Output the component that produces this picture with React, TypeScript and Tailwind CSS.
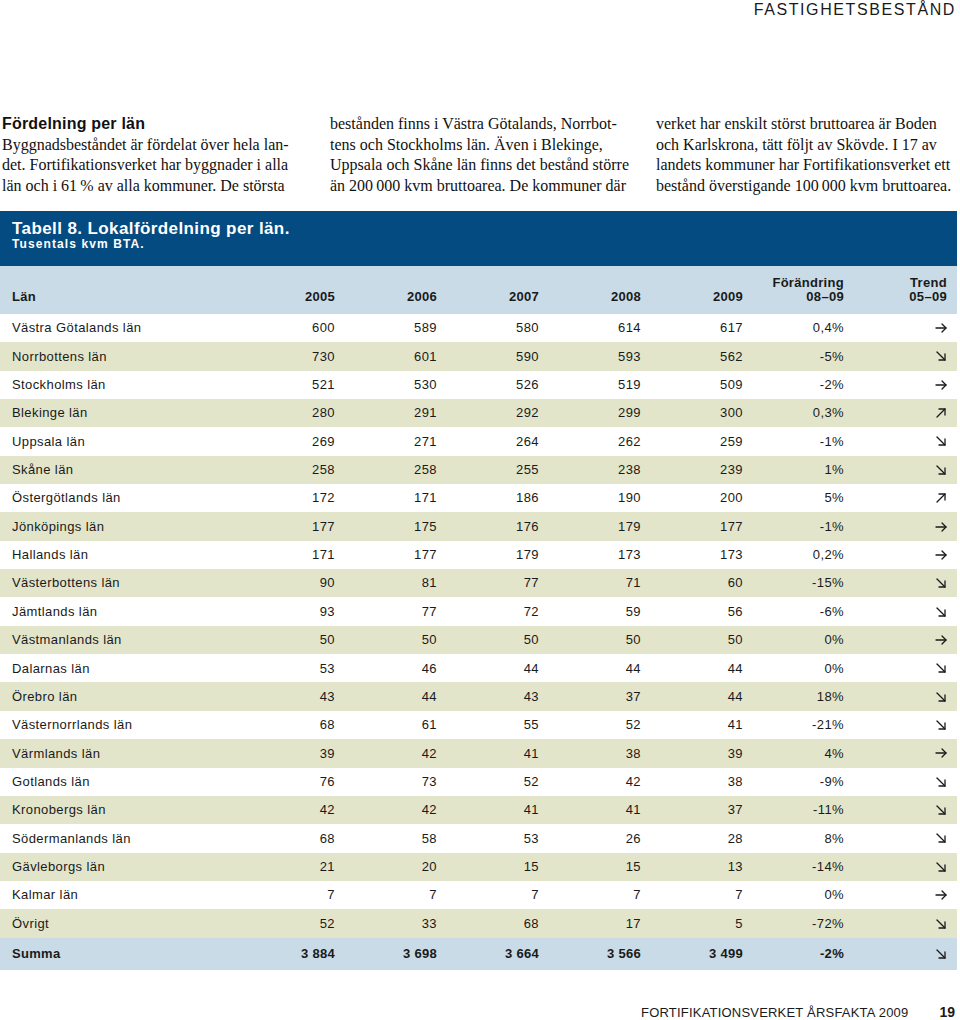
import React from 'react';

type Trend = 'flat' | 'down' | 'up';

const rows: [string, string, string, string, string, string, string, Trend][] = [
  ['Västra Götalands län', '600', '589', '580', '614', '617', '0,4%', 'flat'],
  ['Norrbottens län', '730', '601', '590', '593', '562', '-5%', 'down'],
  ['Stockholms län', '521', '530', '526', '519', '509', '-2%', 'flat'],
  ['Blekinge län', '280', '291', '292', '299', '300', '0,3%', 'up'],
  ['Uppsala län', '269', '271', '264', '262', '259', '-1%', 'down'],
  ['Skåne län', '258', '258', '255', '238', '239', '1%', 'down'],
  ['Östergötlands län', '172', '171', '186', '190', '200', '5%', 'up'],
  ['Jönköpings län', '177', '175', '176', '179', '177', '-1%', 'flat'],
  ['Hallands län', '171', '177', '179', '173', '173', '0,2%', 'flat'],
  ['Västerbottens län', '90', '81', '77', '71', '60', '-15%', 'down'],
  ['Jämtlands län', '93', '77', '72', '59', '56', '-6%', 'down'],
  ['Västmanlands län', '50', '50', '50', '50', '50', '0%', 'flat'],
  ['Dalarnas län', '53', '46', '44', '44', '44', '0%', 'down'],
  ['Örebro län', '43', '44', '43', '37', '44', '18%', 'down'],
  ['Västernorrlands län', '68', '61', '55', '52', '41', '-21%', 'down'],
  ['Värmlands län', '39', '42', '41', '38', '39', '4%', 'flat'],
  ['Gotlands län', '76', '73', '52', '42', '38', '-9%', 'down'],
  ['Kronobergs län', '42', '42', '41', '41', '37', '-11%', 'down'],
  ['Södermanlands län', '68', '58', '53', '26', '28', '8%', 'down'],
  ['Gävleborgs län', '21', '20', '15', '15', '13', '-14%', 'down'],
  ['Kalmar län', '7', '7', '7', '7', '7', '0%', 'flat'],
  ['Övrigt', '52', '33', '68', '17', '5', '-72%', 'down'],
];

const cols = 'grid grid-cols-[233px_102px_102px_102px_102px_102px_101px_103px] pr-[10px]';

function Arrow({ dir }: { dir: Trend }) {
  return (
    <svg width="12" height="12" viewBox="0 0 12 12" fill="none" stroke="#1a1a1a" strokeWidth="1.3" strokeLinecap="round" strokeLinejoin="round">
      {dir === 'flat' && (
        <>
          <line x1="1" y1="6" x2="11" y2="6" />
          <polyline points="7,2 11,6 7,10" />
        </>
      )}
      {dir === 'down' && (
        <>
          <line x1="2" y1="2" x2="10" y2="10" />
          <polyline points="10,4 10,10 4,10" />
        </>
      )}
      {dir === 'up' && (
        <>
          <line x1="2" y1="10" x2="10" y2="2" />
          <polyline points="4,2 10,2 10,8" />
        </>
      )}
    </svg>
  );
}

export default function App() {
  return (
    <div className="w-[960px] h-[1020px] bg-white text-[#1a1a1a] font-['Liberation_Sans',Arial,sans-serif]">
      {/* sidhuvud */}
      <div className="flex justify-end pr-[4px] pt-[1px] text-[16px] leading-[18px] tracking-[1.6px]">FASTIGHETSBESTÅND</div>

      {/* brödtext i tre spalter */}
      <div className="grid grid-cols-[300px_300px_300px] gap-x-[27px] pl-[2px] pt-[95px] font-['Liberation_Serif','Times_New_Roman',serif] text-[16px] leading-[20.7px] text-[#111] whitespace-nowrap">
        <div>
          <div className="font-['Liberation_Sans',Arial,sans-serif] font-bold text-[16px] tracking-[0.2px]">Fördelning per län</div>
          <div>Byggnadsbeståndet är fördelat över hela lan-</div>
          <div>det. Fortifikationsverket har byggnader i alla</div>
          <div>län och i 61&#8201;% av alla kommuner. De största</div>
        </div>
        <div className="pl-[1px]">
          <div>bestånden finns i Västra Götalands, Norrbot-</div>
          <div>tens och Stockholms län. Även i Blekinge,</div>
          <div>Uppsala och Skåne län finns det bestånd större</div>
          <div>än 200&#8201;000 kvm bruttoarea. De kommuner där</div>
        </div>
        <div>
          <div>verket har enskilt störst bruttoarea är Boden</div>
          <div>och Karlskrona, tätt följt av Skövde. I 17 av</div>
          <div>landets kommuner har Fortifikationsverket ett</div>
          <div>bestånd överstigande 100&#8201;000 kvm bruttoarea.</div>
        </div>
      </div>

      {/* tabell */}
      <div className="mt-[14px] w-[957px]">
        <div className="h-[55px] bg-[#034b81] text-white pl-[12px] pt-[8px]">
          <div className="text-[17px] leading-[19px] font-bold tracking-[0.4px]">Tabell 8. Lokalfördelning per län.</div>
          <div className="text-[12px] leading-[14px] font-bold tracking-[1.1px] mt-[-1px]">Tusentals kvm BTA.</div>
        </div>
        <div className={`${cols} h-[48px] bg-[#c9dbe6] items-end pb-[10px] text-[13px] leading-[14px] font-bold tracking-[0.3px]`}>
          <div className="pl-[12px]">Län</div>
          <div className="text-right">2005</div>
          <div className="text-right">2006</div>
          <div className="text-right">2007</div>
          <div className="text-right">2008</div>
          <div className="text-right">2009</div>
          <div className="text-right">Förändring<br />08–09</div>
          <div className="text-right">Trend<br />05–09</div>
        </div>
        {rows.map((r, i) => (
          <div key={r[0]} className={`${cols} h-[28.36px] items-center text-[13px] tracking-[0.4px] ${i % 2 === 1 ? 'bg-[#e3e5cb]' : 'bg-white'}`}>
            <div className="pl-[12px]">{r[0]}</div>
            {r.slice(1, 7).map((v, j) => (
              <div key={j} className="text-right">{v}</div>
            ))}
            <div className="flex justify-end"><Arrow dir={r[7]} /></div>
          </div>
        ))}
        <div className={`${cols} h-[32px] items-center text-[13px] font-bold tracking-[0.3px] bg-[#c9dbe6]`}>
          <div className="pl-[12px]">Summa</div>
          <div className="text-right">3 884</div>
          <div className="text-right">3 698</div>
          <div className="text-right">3 664</div>
          <div className="text-right">3 566</div>
          <div className="text-right">3 499</div>
          <div className="text-right">-2%</div>
          <div className="flex justify-end"><Arrow dir="down" /></div>
        </div>
      </div>

      {/* sidfot */}
      <div className="flex justify-end items-baseline gap-[31px] pr-[5px] pt-[34px] text-[13px] leading-[16px]">
        <span className="tracking-[0.2px]">FORTIFIKATIONSVERKET ÅRSFAKTA 2009</span>
        <span className="font-bold text-[14px]">19</span>
      </div>
    </div>
  );
}
